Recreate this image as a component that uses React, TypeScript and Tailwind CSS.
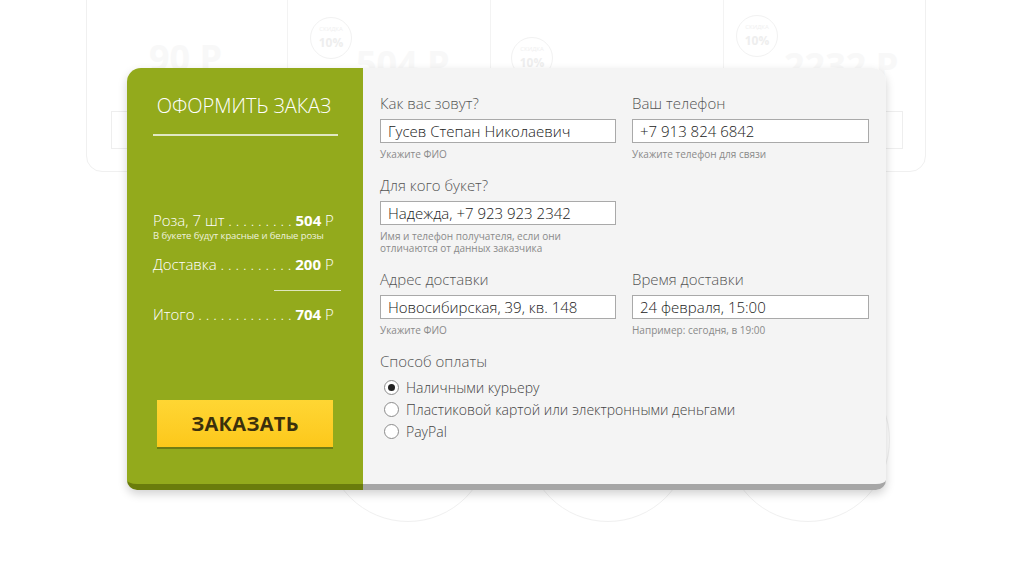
import React from "react";

const font = { fontFamily: '"Open Sans", "Noto Sans", sans-serif' };

function Field({
  label,
  value,
  hint,
}: {
  label: string;
  value: string;
  hint: React.ReactNode;
}) {
  return (
    <div className="flex flex-col">
      <label className="text-[15px] leading-[18px] font-light text-[#555]">{label}</label>
      <div className="mt-[7px] h-[24px] border border-[#a9a9a9] bg-white px-[7px] text-[15px] font-light leading-[22px] text-[#222]">
        {value}
      </div>
      <p className="mt-[5px] text-[10px] leading-[12px] text-[#8a8a8a]">{hint}</p>
    </div>
  );
}

function Radio({ label, checked }: { label: string; checked?: boolean }) {
  return (
    <div className="flex h-[22px] items-center">
      <span className="ml-[4px] flex h-[15px] w-[15px] items-center justify-center rounded-full border border-[#8c8c8c] bg-white">
        {checked && <span className="h-[7px] w-[7px] rounded-full bg-[#222]" />}
      </span>
      <span className="ml-[7px] text-[14px] font-light text-[#444]">{label}</span>
    </div>
  );
}

function Badge({ className }: { className: string }) {
  return (
    <div
      className={`absolute flex h-[42px] w-[42px] flex-col items-center justify-center rounded-full border border-[#f2f2f2] ${className}`}
    >
      <span className="text-[6px] leading-[9px] text-[#f0f0f0]">СКИДКА</span>
      <span className="text-[12px] font-bold leading-[17px] text-[#eeeeee]">10%</span>
    </div>
  );
}

function FadedBackground() {
  return (
    <div className="pointer-events-none absolute inset-0">
      <div className="absolute left-[86px] top-[-20px] flex h-[192px] w-[840px] rounded-b-[16px] border border-[#f0f0f0]">
        <div className="relative w-[201px] border-r border-[#f3f3f3]">
          <span className="absolute left-[62px] top-[50px] text-[36px] font-bold text-[#f8f8f8]">90 Р</span>
          <div className="absolute left-[24px] top-[130px] h-[38px] w-[60px] border border-[#eeeeee]" />
        </div>
        <div className="relative w-[203px] border-r border-[#f3f3f3]">
          <Badge className="left-[22px] top-[36px]" />
          <span className="absolute left-[68px] top-[56px] text-[36px] font-bold text-[#f8f8f8]">504 Р</span>
        </div>
        <div className="relative w-[233px] border-r border-[#f3f3f3]">
          <Badge className="left-[20px] top-[56px]" />
        </div>
        <div className="relative flex-1">
          <Badge className="left-[12px] top-[34px]" />
          <span className="absolute left-[60px] top-[58px] text-[36px] font-bold text-[#f8f8f8]">2232 Р</span>
          <div className="absolute right-[22px] top-[130px] h-[38px] w-[60px] border border-[#eeeeee]" />
        </div>
      </div>
      <div className="absolute left-[326px] top-[358px] h-[164px] w-[164px] rounded-full border border-[#f0f0f0]" />
      <div className="absolute left-[526px] top-[358px] h-[164px] w-[164px] rounded-full border border-[#f0f0f0]" />
      <div className="absolute left-[726px] top-[358px] h-[164px] w-[164px] rounded-full border border-[#f0f0f0]" />
    </div>
  );
}

export default function App() {
  return (
    <div className="relative h-[568px] w-[1011px] overflow-hidden bg-white" style={font}>
      <FadedBackground />
      <div className="relative pl-[127px] pt-[68px]">
        <div className="flex h-[422px] w-[759px] rounded-t-[14px] rounded-b-[10px] shadow-[0_4px_10px_rgba(0,0,0,0.18)]">
          <aside className="flex w-[236px] flex-col rounded-tl-[14px] rounded-bl-[10px] border-b-[6px] border-[#6a7c0c] bg-[#93aa1c] pl-[26px] pr-[28px] text-white">
            <h2 className="mt-[24px] text-center text-[20px] font-light leading-[28px]">ОФОРМИТЬ ЗАКАЗ</h2>
            <div className="mt-[14px] h-[2px] w-[185px] bg-[#e1e8c2]" />
            <div className="mt-[74px] flex flex-col">
              <p className="text-[15px] font-light leading-[20px]">
                Роза, 7 шт . . . . . . . . . <b className="font-bold">504</b> Р
              </p>
              <p className="whitespace-nowrap text-[9.5px] leading-[12px] tracking-[-0.1px] text-[#eef2dc]">
                В букете будут красные и белые розы
              </p>
              <p className="mt-[12px] text-[15px] font-light leading-[20px]">
                Доставка . . . . . . . . . . <b className="font-bold">200</b> Р
              </p>
              <div className="ml-[121px] mt-[16px] h-[1px] w-[67px] bg-[#dfe6bd]" />
              <p className="mt-[13px] text-[15px] font-light leading-[20px]">
                Итого . . . . . . . . . . . . . <b className="font-bold">704</b> Р
              </p>
            </div>
            <button className="ml-[4px] mt-[76px] h-[47px] w-[176px] bg-gradient-to-b from-[#ffd633] to-[#fcc81a] text-[20px] font-bold tracking-[0.3px] text-[#3b300c] shadow-[0_2px_0_#6f7d14]">
              ЗАКАЗАТЬ
            </button>
          </aside>
          <main className="flex flex-1 flex-col rounded-tr-[14px] rounded-br-[10px] border-b-[6px] border-[#a6a6a6] bg-[#f4f4f4] pl-[17px] pr-[16px] pt-[26px]">
            <div className="grid grid-cols-[236px_237px] gap-x-[16px] gap-y-[16px]">
              <Field label="Как вас зовут?" value="Гусев Степан Николаевич" hint="Укажите ФИО" />
              <Field label="Ваш телефон" value="+7 913 824 6842" hint="Укажите телефон для связи" />
              <Field
                label="Для кого букет?"
                value="Надежда, +7 923 923 2342"
                hint={
                  <>
                    Имя и телефон получателя, если они
                    <br />
                    отличаются от данных заказчика
                  </>
                }
              />
              <div />
              <Field label="Адрес доставки" value="Новосибирская, 39, кв. 148" hint="Укажите ФИО" />
              <Field label="Время доставки" value="24 февраля, 15:00" hint="Например: сегодня, в 19:00" />
            </div>
            <p className="mt-[16px] text-[15px] font-light leading-[18px] text-[#555]">Способ оплаты</p>
            <div className="mt-[6px] flex flex-col">
              <Radio label="Наличными курьеру" checked />
              <Radio label="Пластиковой картой или электронными деньгами" />
              <Radio label="PayPal" />
            </div>
          </main>
        </div>
      </div>
    </div>
  );
}
